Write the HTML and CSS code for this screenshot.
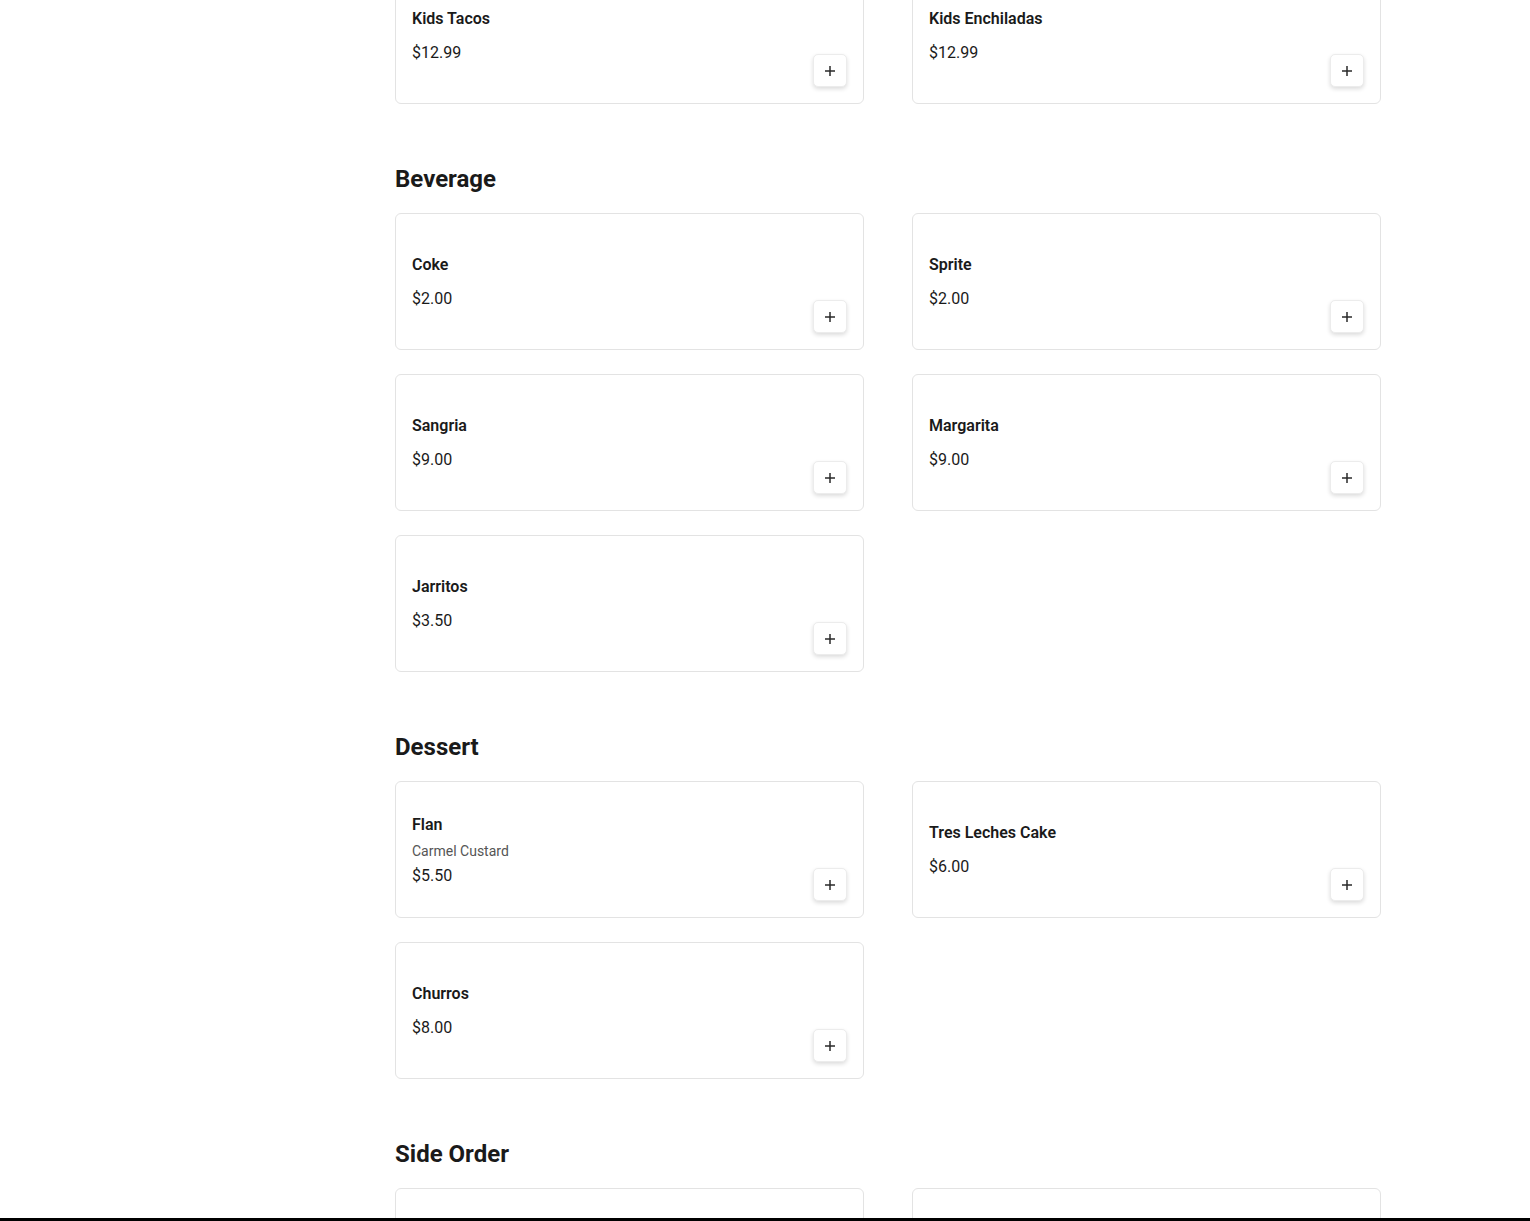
FILE: index.html
```html
<!DOCTYPE html>
<html lang="en">
<head>
<meta charset="utf-8">
<title>Menu</title>
<link rel="stylesheet" href="styles.css">
</head>
<body>
<main class="menu">
  <section class="section section-first">
    <div class="grid">
      <div class="card">
        <div class="info"><div class="name">Kids Tacos</div><div class="price">$12.99</div></div>
        <button class="add" aria-label="Add"><svg width="12" height="12" viewBox="0 0 12 12"><path d="M6 1v10M1 6h10" stroke="#2a2a2a" stroke-width="1.5"/></svg></button>
      </div>
      <div class="card">
        <div class="info"><div class="name">Kids Enchiladas</div><div class="price">$12.99</div></div>
        <button class="add" aria-label="Add"><svg width="12" height="12" viewBox="0 0 12 12"><path d="M6 1v10M1 6h10" stroke="#2a2a2a" stroke-width="1.5"/></svg></button>
      </div>
    </div>
  </section>

  <section class="section">
    <h2 class="title">Beverage</h2>
    <div class="grid">
      <div class="card">
        <div class="info"><div class="name">Coke</div><div class="price">$2.00</div></div>
        <button class="add" aria-label="Add"><svg width="12" height="12" viewBox="0 0 12 12"><path d="M6 1v10M1 6h10" stroke="#2a2a2a" stroke-width="1.5"/></svg></button>
      </div>
      <div class="card">
        <div class="info"><div class="name">Sprite</div><div class="price">$2.00</div></div>
        <button class="add" aria-label="Add"><svg width="12" height="12" viewBox="0 0 12 12"><path d="M6 1v10M1 6h10" stroke="#2a2a2a" stroke-width="1.5"/></svg></button>
      </div>
      <div class="card">
        <div class="info"><div class="name">Sangria</div><div class="price">$9.00</div></div>
        <button class="add" aria-label="Add"><svg width="12" height="12" viewBox="0 0 12 12"><path d="M6 1v10M1 6h10" stroke="#2a2a2a" stroke-width="1.5"/></svg></button>
      </div>
      <div class="card">
        <div class="info"><div class="name">Margarita</div><div class="price">$9.00</div></div>
        <button class="add" aria-label="Add"><svg width="12" height="12" viewBox="0 0 12 12"><path d="M6 1v10M1 6h10" stroke="#2a2a2a" stroke-width="1.5"/></svg></button>
      </div>
      <div class="card">
        <div class="info"><div class="name">Jarritos</div><div class="price">$3.50</div></div>
        <button class="add" aria-label="Add"><svg width="12" height="12" viewBox="0 0 12 12"><path d="M6 1v10M1 6h10" stroke="#2a2a2a" stroke-width="1.5"/></svg></button>
      </div>
    </div>
  </section>

  <section class="section">
    <h2 class="title">Dessert</h2>
    <div class="grid">
      <div class="card">
        <div class="info info-desc"><div class="name">Flan</div><div class="desc">Carmel Custard</div><div class="price">$5.50</div></div>
        <button class="add" aria-label="Add"><svg width="12" height="12" viewBox="0 0 12 12"><path d="M6 1v10M1 6h10" stroke="#2a2a2a" stroke-width="1.5"/></svg></button>
      </div>
      <div class="card">
        <div class="info"><div class="name">Tres Leches Cake</div><div class="price">$6.00</div></div>
        <button class="add" aria-label="Add"><svg width="12" height="12" viewBox="0 0 12 12"><path d="M6 1v10M1 6h10" stroke="#2a2a2a" stroke-width="1.5"/></svg></button>
      </div>
      <div class="card">
        <div class="info"><div class="name">Churros</div><div class="price">$8.00</div></div>
        <button class="add" aria-label="Add"><svg width="12" height="12" viewBox="0 0 12 12"><path d="M6 1v10M1 6h10" stroke="#2a2a2a" stroke-width="1.5"/></svg></button>
      </div>
    </div>
  </section>

  <section class="section">
    <h2 class="title">Side Order</h2>
    <div class="grid">
      <div class="card"></div>
      <div class="card"></div>
    </div>
  </section>
</main>
<div class="bottom-bar"></div>
</body>
</html>
```

FILE: styles.css
```css
html, body {
  margin: 0;
  padding: 0;
  background: #ffffff;
  overflow: hidden;
}

body {
  font-family: Roboto, "Liberation Sans", Arial, sans-serif;
  color: #1a1a1a;
}

.menu {
  padding-left: 395px;
  width: 986px;
}

.section {
  margin-top: 59px;
}

.section-first {
  margin-top: -33px;
}

.title {
  margin: 0 0 18px 0;
  font-size: 24px;
  line-height: 32px;
  font-weight: 700;
  color: #1a1a1a;
}

.grid {
  display: grid;
  grid-template-columns: 469px 469px;
  column-gap: 48px;
  row-gap: 24px;
}

.card {
  box-sizing: border-box;
  height: 137px;
  border: 1px solid #e3e3e3;
  border-radius: 6px;
  padding: 16px;
  display: flex;
  align-items: center;
  justify-content: space-between;
  background: #fff;
}

.info {
  display: flex;
  flex-direction: column;
}

.info-desc {
  padding-top: 2px;
}

.name {
  font-size: 16px;
  line-height: 24px;
  font-weight: 600;
  color: #1a1a1a;
}

.desc {
  margin-top: 4px;
  font-size: 14px;
  line-height: 20px;
  color: #555555;
}

.price {
  margin-top: 10px;
  font-size: 16px;
  line-height: 24px;
  color: #1a1a1a;
}

.desc + .price {
  margin-top: 3px;
}

.add {
  align-self: flex-end;
  box-sizing: border-box;
  width: 34px;
  height: 33px;
  padding: 0;
  border: 1px solid #ececec;
  border-radius: 5px;
  background: #fff;
  box-shadow: 0 2px 4px rgba(0, 0, 0, 0.14);
  display: flex;
  align-items: center;
  justify-content: center;
  cursor: pointer;
}

.add svg {
  display: block;
}

.bottom-bar {
  position: fixed;
  left: 0;
  right: 0;
  bottom: 0;
  height: 3px;
  background: #000;
}
```
